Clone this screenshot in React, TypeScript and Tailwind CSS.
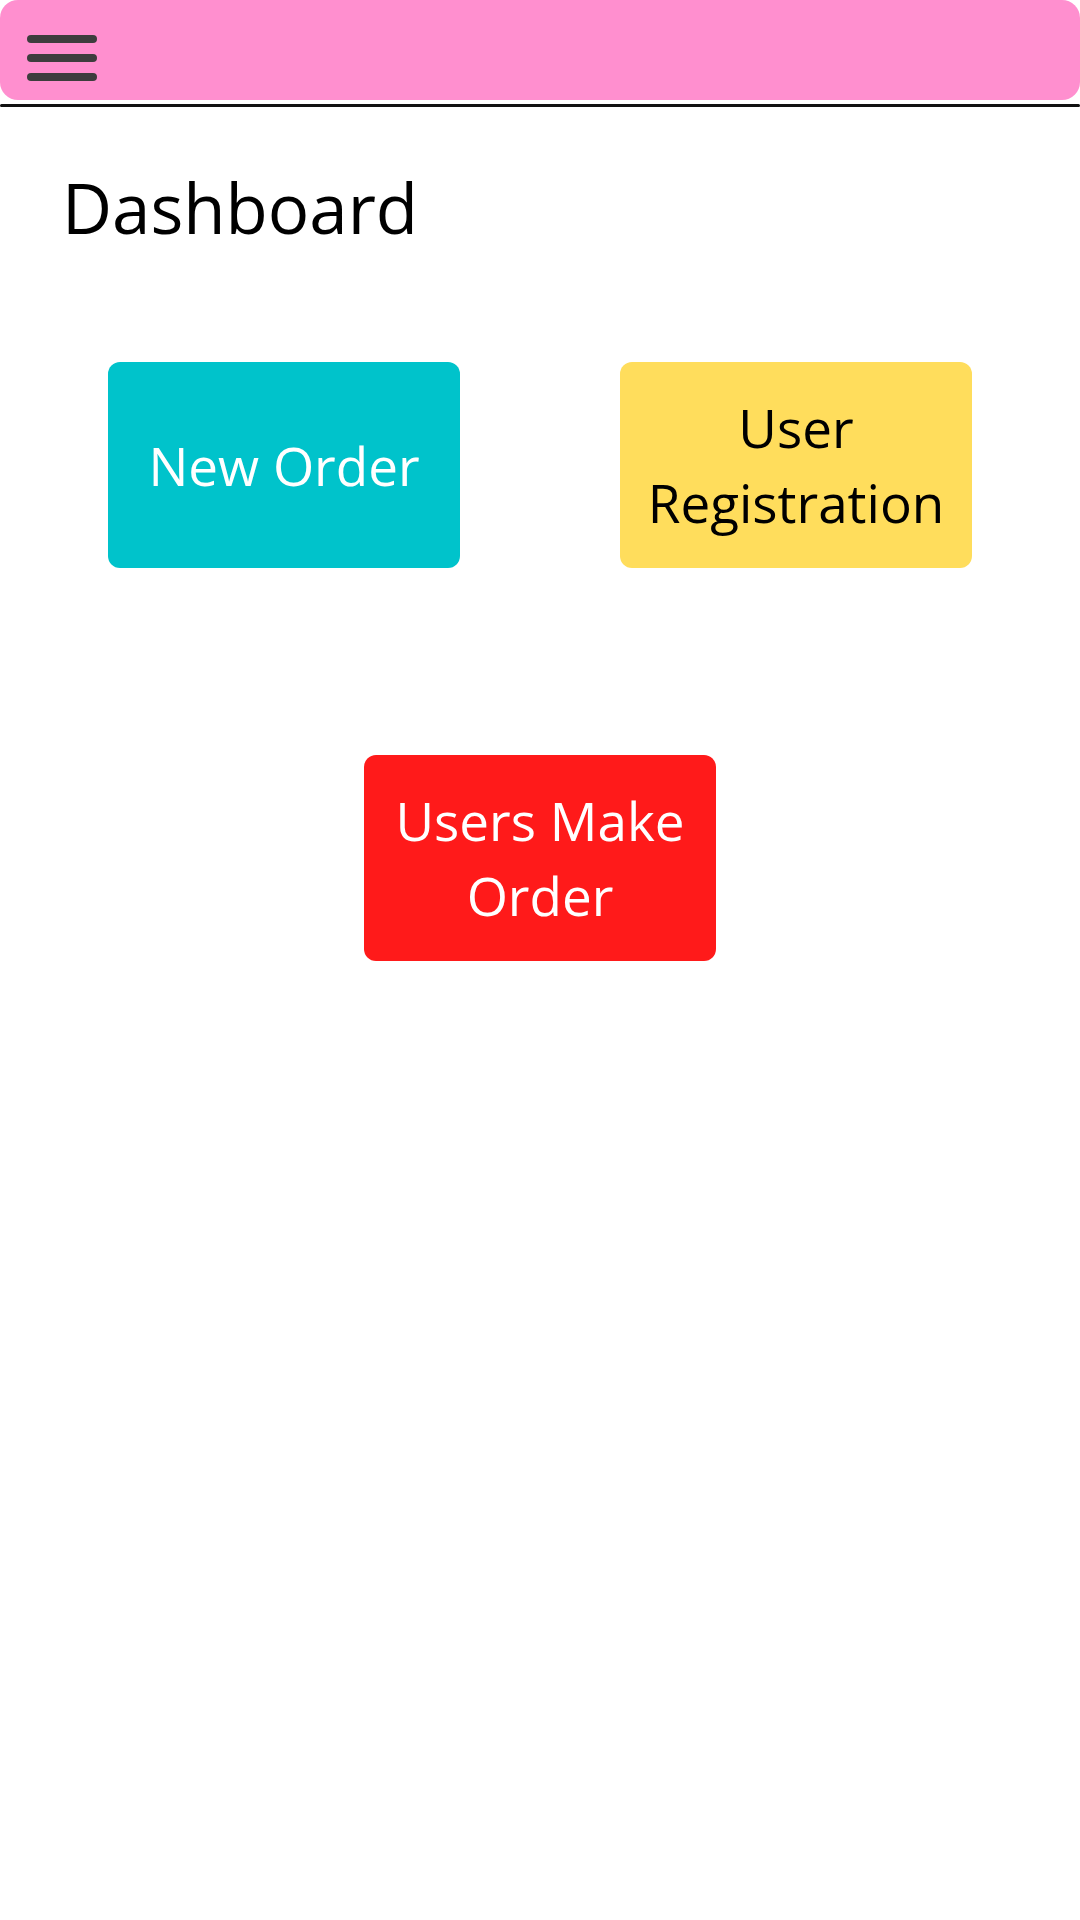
import React from "react";

export default function App() {
  const font = { fontFamily: '"Open Sans", "Noto Sans", sans-serif' };
  return (
    <div className="min-h-[1920px] w-[1080px] bg-white" style={font}>
      <header className="h-[100px] rounded-[18px] bg-[#ff8fcf] pl-[27px] pt-[35px]">
        <div className="flex w-[70px] flex-col gap-[11px]">
          <span className="block h-[8px] w-[70px] rounded-full bg-[#3d3d3d]" />
          <span className="block h-[8px] w-[70px] rounded-full bg-[#3d3d3d]" />
          <span className="block h-[8px] w-[70px] rounded-full bg-[#3d3d3d]" />
        </div>
      </header>
      <div className="mt-[4px] h-[3px] w-full rounded-full bg-[#111111]" />
      <h1 className="mt-[66px] pl-[62px] text-[69px] leading-none font-normal text-black">
        Dashboard
      </h1>
      <div className="mt-[120px] grid grid-cols-2 px-[28px]">
        <div className="flex justify-center">
          <button className="flex h-[206px] w-[352px] items-center justify-center rounded-[12px] bg-[#00c3cb] px-2 text-center text-[53px] leading-[75px] text-white">
            New Order
          </button>
        </div>
        <div className="flex justify-center">
          <button className="flex h-[206px] w-[352px] items-center justify-center rounded-[12px] bg-[#ffdd5c] px-2 text-center text-[53px] leading-[75px] text-black">
            User Registration
          </button>
        </div>
      </div>
      <div className="mt-[187px] flex justify-center">
        <button className="flex h-[206px] w-[352px] items-center justify-center rounded-[12px] bg-[#ff1a1a] px-2 text-center text-[53px] leading-[75px] text-white">
          Users Make Order
        </button>
      </div>
    </div>
  );
}
